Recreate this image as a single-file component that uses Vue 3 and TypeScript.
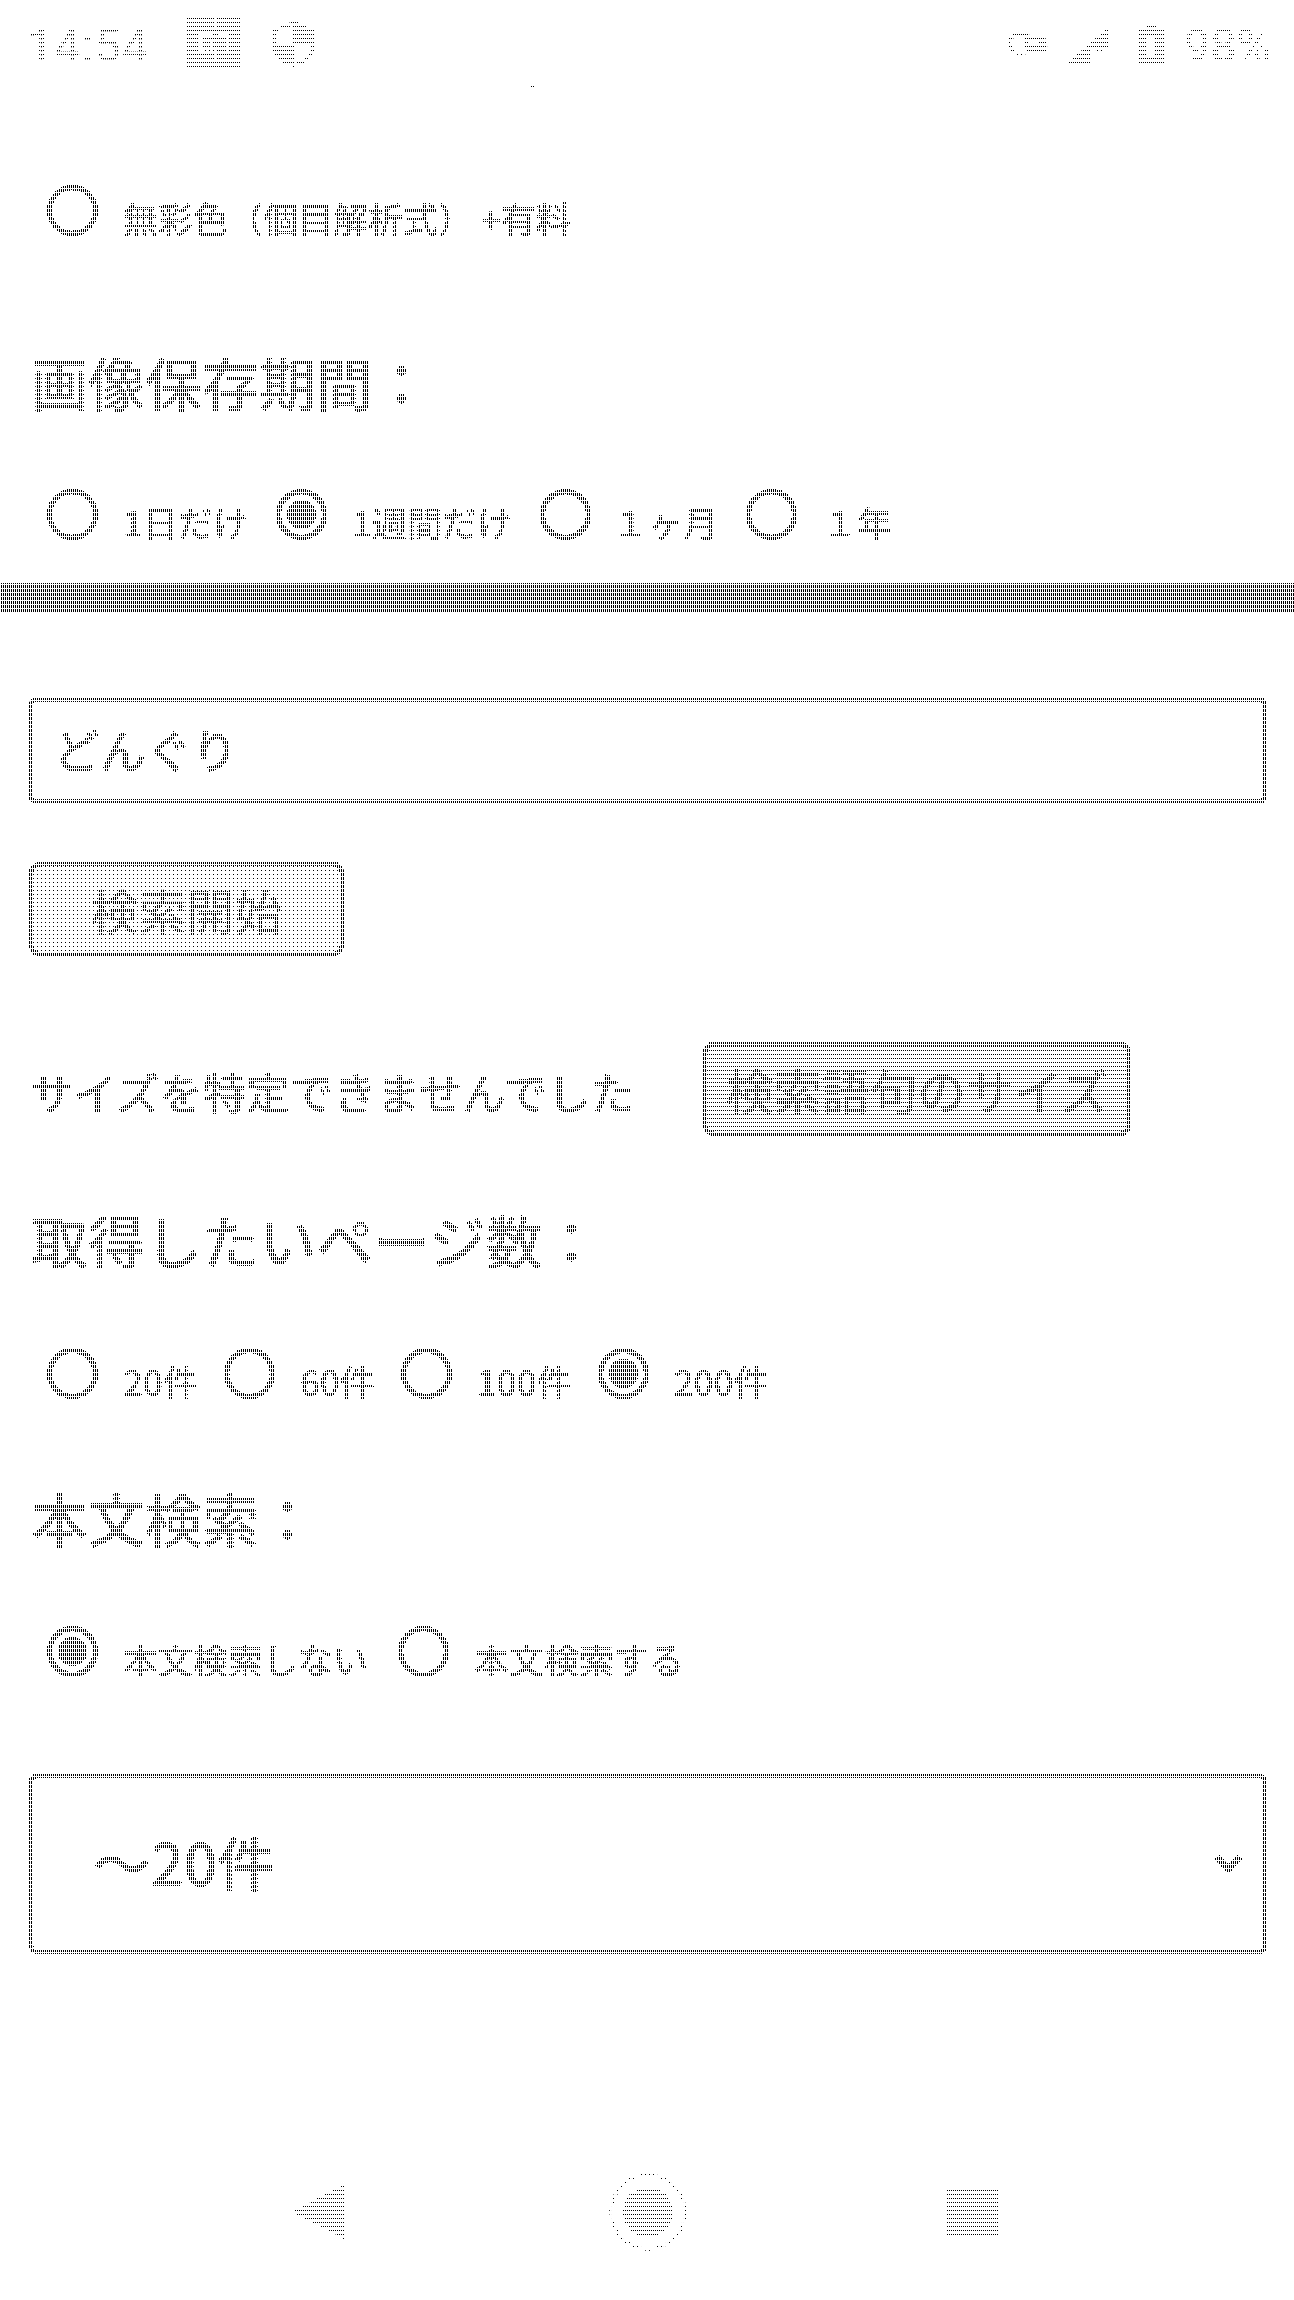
<script setup lang="ts">
interface Opt { label: string; on?: boolean }
const mono: Opt[] = [{ label: '無彩色（個目解析式） +有料' }]
const keep: Opt[] = [{ label: '1日だけ' }, { label: '1週間だけ', on: true }, { label: '１ヶ月' }, { label: '１年' }]
const pages: Opt[] = [{ label: '20件' }, { label: '60件' }, { label: '100件' }, { label: '200件', on: true }]
const body: Opt[] = [{ label: '本文検索しない', on: true }, { label: '本文検索する' }]
</script>

<template>
  <div class="page">
    <header class="status">
      <span class="time">14:54</span>
      <svg class="ic-photo" width="54" height="50" viewBox="0 0 54 50">
        <rect width="54" height="50" fill="#c0c0c0" />
        <path d="M28 0v9M14 16v18M40 16v18M14 16h12M32 16h8M24 24v8M14 34h14v10" stroke="#fff" stroke-width="3" fill="none" />
      </svg>
      <svg class="ic-shield" width="43" height="46" viewBox="0 0 43 46">
        <path d="M21.500 2 2 10v13c0 11 9 19 19.500 21C32 42 41 34 41 23V10Z" fill="none" stroke="#c0c0c0" stroke-width="3.500" />
        <path d="M21.500 2 41 10v13H21.500ZM21.500 23v21C11 42 2 34 2 23Z" fill="#c0c0c0" />
      </svg>
      <span class="spacer"></span>
      <svg class="ic-link" width="44" height="23" viewBox="0 0 44 23">
        <rect x="2" y="2" width="22" height="19" rx="9" fill="none" stroke="#ccc" stroke-width="3" />
        <path d="M17 5h18a9 9 0 0 1 0 16H25a9 9 0 0 1-8-8Z" fill="#ccc" />
        <rect x="21" y="9" width="10" height="5" fill="#fff" />
      </svg>
      <svg class="ic-signal" width="41" height="37" viewBox="0 0 41 37">
        <path d="M41 0v37H0Z" fill="#ccc" />
        <rect x="23" y="21" width="18" height="16" fill="#fff" />
        <path d="M27 25h7M31 31h7" stroke="#ddd" stroke-width="2" />
      </svg>
      <svg class="ic-batt" width="25" height="41" viewBox="0 0 25 41">
        <path d="M8 0h9v4h8v37H0V4h8Z" fill="#ccc" />
        <rect x="8" y="12" width="8" height="20" fill="#fff" />
      </svg>
      <span class="pct">98%</span>
    </header>
    <i class="tick"></i>

    <section class="radios first">
      <label v-for="o in mono" :key="o.label" class="opt">
        <span class="radio" :class="{ on: o.on }"></span><span>{{ o.label }}</span>
      </label>
    </section>

    <h2 class="head h1">画像保存期間：</h2>
    <section class="radios r2">
      <label v-for="o in keep" :key="o.label" class="opt">
        <span class="radio" :class="{ on: o.on }"></span><span>{{ o.label }}</span>
      </label>
    </section>

    <hr class="rule" />

    <div class="input">どんぐり</div>
    <button class="btn go" type="button">検索開始</button>

    <div class="sizes">
      <span class="msg">サイズを特定できませんでした</span>
      <button class="btn size" type="button">検索語句のサイズ</button>
    </div>

    <h2 class="head h2">取得したいページ数：</h2>
    <section class="radios r3">
      <label v-for="o in pages" :key="o.label" class="opt">
        <span class="radio" :class="{ on: o.on }"></span><span>{{ o.label }}</span>
      </label>
    </section>

    <h2 class="head h3">本文検索：</h2>
    <section class="radios r4">
      <label v-for="o in body" :key="o.label" class="opt">
        <span class="radio" :class="{ on: o.on }"></span><span>{{ o.label }}</span>
      </label>
    </section>

    <div class="select">
      <span class="sel-text">〜20件</span>
      <svg width="29" height="19" viewBox="0 0 29 19"><path d="M3 2 14.500 14 26 2" fill="none" stroke="#000" stroke-width="6" /></svg>
    </div>

    <nav class="nav">
      <svg width="52" height="54" viewBox="0 0 52 54"><path d="M52 0v54L0 27Z" fill="#c0c0c0" /></svg>
      <svg width="78" height="78" viewBox="0 0 78 78">
        <circle cx="39" cy="39" r="37" fill="none" stroke="#ddd" stroke-width="3" />
        <circle cx="39" cy="39" r="25" fill="#c0c0c0" />
      </svg>
      <svg width="52" height="50" viewBox="0 0 52 50"><rect width="52" height="50" fill="#c0c0c0" /></svg>
    </nav>

    <!-- print screen: each 4×4 cell holds the threshold at which a pixel inks -->
    <svg class="screen" width="1294" height="2300" aria-hidden="true">
      <defs>
        <pattern id="cell" width="4" height="4" patternUnits="userSpaceOnUse">
          <rect width="4" height="4" fill="#fff" />
          <rect x="1" y="2" width="1" height="1" fill="#000" />
          <rect x="3" y="2" width="1" height="1" fill="#1c1c1c" />
          <rect x="1" y="3" width="1" height="1" fill="#424242" />
          <rect x="3" y="3" width="1" height="1" fill="#424242" />
          <rect x="1" y="1" width="1" height="1" fill="#5c5c5c" />
          <rect x="3" y="1" width="1" height="1" fill="#5c5c5c" />
        </pattern>
      </defs>
      <rect width="1294" height="2300" fill="url(#cell)" shape-rendering="crispEdges" />
    </svg>
  </div>
</template>

<style scoped>
.page {
  position: relative;
  width: 1294px;
  height: 2300px;
  overflow: hidden;
  background: #fff;
  color: #000;
  font-family: "Noto Sans CJK JP", "Noto Sans", sans-serif;
  font-weight: 500;
  filter: grayscale(1) brightness(0.52) contrast(60);
}
.screen {
  position: absolute;
  inset: 0;
  mix-blend-mode: plus-lighter;
  pointer-events: none;
}
.status {
  display: flex;
  align-items: center;
  height: 90px;
  padding: 0 23px 0 27px;
  box-sizing: border-box;
  color: #b4b4b4;
  font-family: Roboto, sans-serif;
  font-weight: 400;
  font-size: 47px;
}
.time { width: 160px; letter-spacing: 1px; }
.ic-photo { margin-top: -4px; }
.ic-shield { margin: -2px 0 0 31px; }
.spacer { flex: 1; }
.ic-link { margin: -4px 16px 0 0; }
.ic-signal { margin: -1px 30px 0 0; }
.ic-batt { margin: -1px 20px 0 0; }
.pct { color: #ccc; }
.tick {
  position: absolute;
  left: 530px;
  top: 86px;
  width: 4px;
  height: 1px;
  background: #bbb;
}
.radios {
  display: flex;
  align-items: flex-end;
  gap: 30px;
  padding-left: 47px;
  font-size: 35px;
  line-height: 36px;
}
.first { margin-top: 95px; }
.r2 { margin-top: 79px; gap: 28px; }
.r3 { margin-top: 80px; gap: 26px; }
.r4 { margin-top: 80px; }
.r2 .opt:nth-child(3) span:last-child { margin-left: -3px; }
.opt {
  display: flex;
  align-items: flex-end;
  gap: 25px;
}
.radio {
  position: relative;
  width: 51px;
  height: 51px;
  box-sizing: border-box;
  border: 5px solid #000;
  border-radius: 50%;
}
.radio.on::after {
  content: "";
  position: absolute;
  inset: 6px;
  border-radius: 50%;
  background: #000;
}
.head {
  margin: 0;
  padding-left: 31px;
  font-size: 57px;
  font-weight: 500;
  line-height: 58px;
}
.h1 { margin-top: 116px; }
.h2 { margin-top: 74px; }
.h3 { margin-top: 89px; }
.rule {
  margin: 43px 0 0;
  height: 30px;
  border: 0;
  background: #000;
}
.input {
  margin: 85px 27px 0 29px;
  height: 105px;
  box-sizing: border-box;
  padding-left: 21px;
  border: 4px solid #000;
  border-radius: 6px;
  font-size: 46px;
  line-height: 92px;
}
.btn {
  display: block;
  height: 94px;
  box-sizing: border-box;
  padding: 0;
  border: 4px solid #000;
  border-radius: 11px;
  font-family: inherit;
  font-weight: 500;
  font-size: 48px;
  line-height: 1;
}
.go {
  width: 315px;
  margin: 59px 0 0 29px;
  background: #ddd;
  color: #888;
}
.sizes {
  display: flex;
  align-items: center;
  gap: 72px;
  margin-top: 86px;
  padding-left: 30px;
}
.msg { width: 601px; font-size: 43.500px; line-height: 1; padding-top: 5px; white-space: nowrap; }
.size {
  width: 428px;
  background: #c0c0c0;
  color: #777;
}
.select {
  display: flex;
  align-items: center;
  justify-content: space-between;
  margin: 97px 27px 0 29px;
  height: 180px;
  box-sizing: border-box;
  padding: 0 20px 0 60px;
  border: 4px solid #000;
  border-radius: 8px;
  font-size: 58px;
}
.sel-text { margin-top: -6px; }
.nav {
  display: flex;
  align-items: center;
  margin-top: 219px;
  padding-left: 292px;
}
.nav svg:nth-child(2) { margin: 0 260px 0 265px; }
</style>
